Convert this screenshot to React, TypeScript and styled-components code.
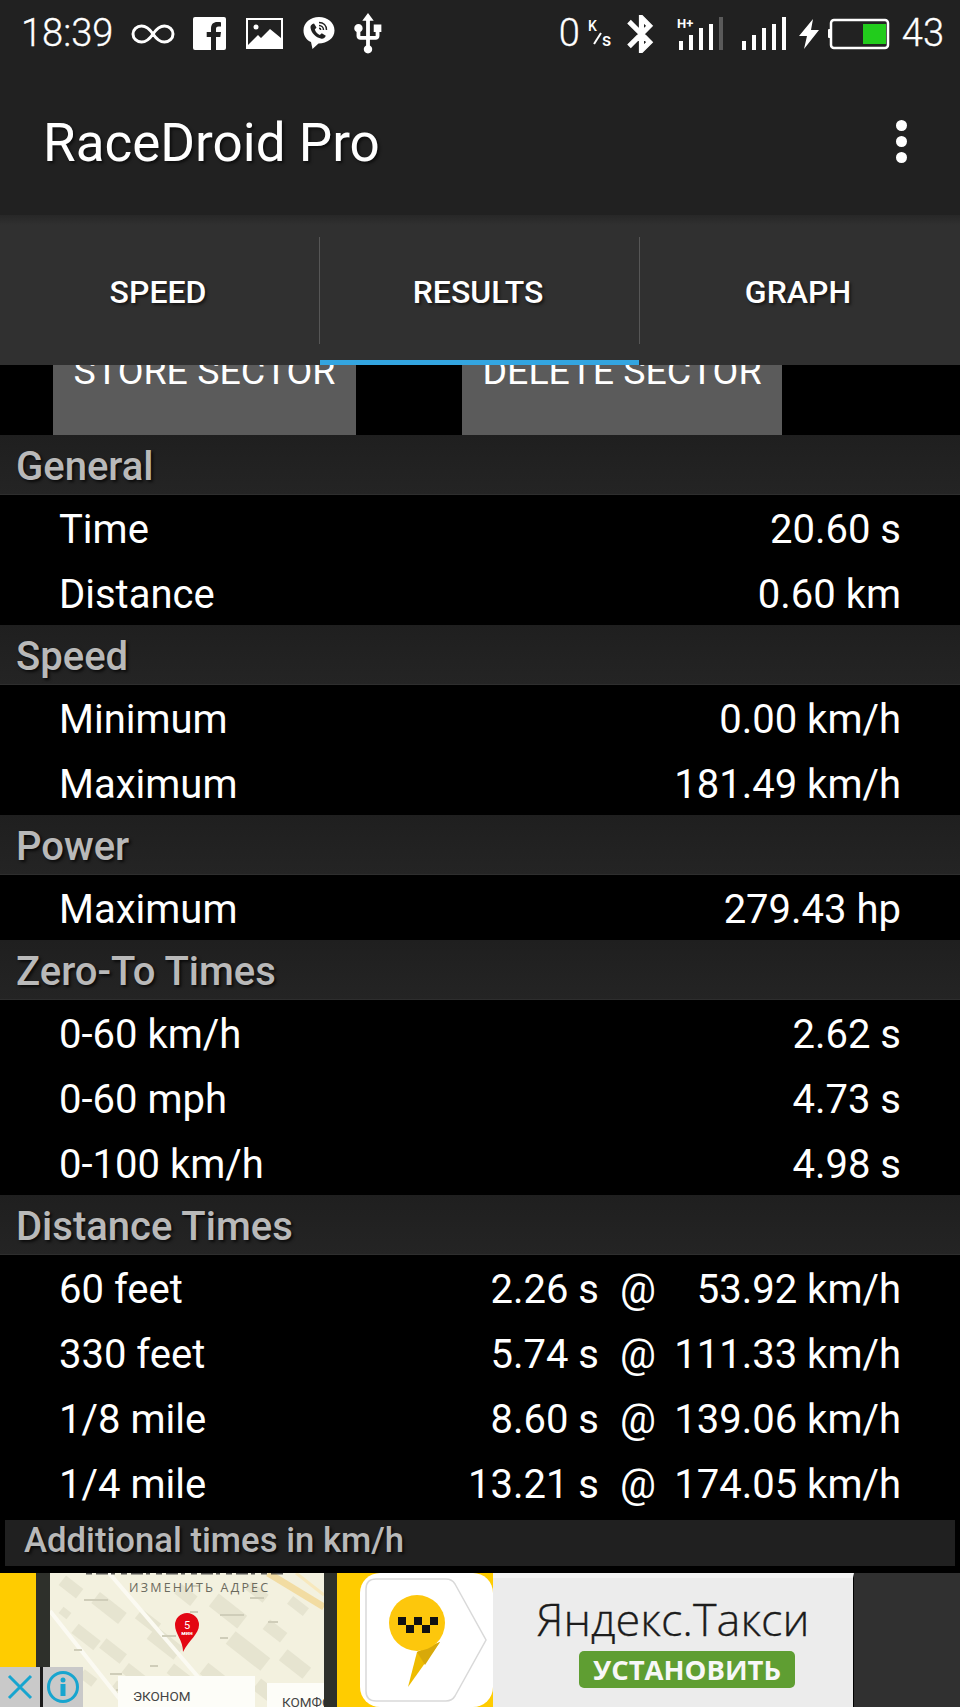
import React from 'react';
import styled, { createGlobalStyle } from 'styled-components';

const GlobalStyle = createGlobalStyle`
  html, body {
    margin: 0;
    padding: 0;
    background: #000;
  }
  * {
    box-sizing: border-box;
  }
`;

const Screen = styled.div`
  width: 960px;
  height: 1707px;
  display: flex;
  flex-direction: column;
  overflow: hidden;
  background: #000;
  color: #fff;
  font-family: Roboto, "Liberation Sans", sans-serif;
`;

/* Status bar */

const StatusBar = styled.div`
  height: 67px;
  flex: none;
  display: flex;
  align-items: center;
  justify-content: space-between;
  padding: 0 16px 0 21px;
  background: #212121;
`;

const StatusGroup = styled.div`
  display: flex;
  align-items: center;
`;

const StatusText = styled.span<{ $left?: number }>`
  font-size: 38px;
  font-weight: 300;
  line-height: 67px;
  margin-left: ${(p) => p.$left ?? 0}px;
  -webkit-text-stroke: 0.3px #fff;
`;

const StatusIcon = styled.svg<{ $left: number }>`
  display: block;
  flex: none;
  margin-left: ${(p) => p.$left}px;
`;

const Signal = ({ left, bars, dim, hplus }: { left: number; bars: number[]; dim?: boolean; hplus?: boolean }) => (
  <StatusIcon $left={left} width="46" height="36" viewBox="0 0 46 36">
    {hplus && (
      <text x="0" y="12" fontSize="13" fontWeight="700" fill="#fff" fontFamily="Roboto, sans-serif">
        H+
      </text>
    )}
    {bars.map((h, i) => (
      <rect
        key={i}
        x={2 + i * 10}
        y={34 - h}
        width="4"
        height={h}
        fill={dim && i === bars.length - 1 ? '#5a5a5a' : '#fff'}
      />
    ))}
  </StatusIcon>
);

/* Action bar */

const ActionBar = styled.div`
  height: 148px;
  flex: none;
  display: flex;
  align-items: center;
  justify-content: space-between;
  padding: 0 53px 0 43px;
  background: #212121;
`;

const Title = styled.h1`
  margin: 4px 0 0;
  font-size: 53px;
  font-weight: 400;
  color: #fff;
  text-shadow: 2px 2px 3px rgba(0, 0, 0, 0.6);
`;

const OverflowMenu = styled.div`
  display: flex;
  flex-direction: column;
  gap: 5px;
`;

const MenuDot = styled.span`
  width: 11px;
  height: 11px;
  border-radius: 50%;
  background: #fff;
`;

/* Tabs */

const TabBar = styled.div`
  height: 150px;
  flex: none;
  display: flex;
  background: linear-gradient(#272727, #303030 10px, #303030);
`;

const Tab = styled.div<{ $active?: boolean; $divider?: boolean }>`
  position: relative;
  flex: 1;
  display: flex;
  align-items: center;
  justify-content: center;
  padding: 3px 4px 0 0;
  font-size: 32px;
  font-weight: 500;
  text-shadow: 2px 2px 3px rgba(0, 0, 0, 0.55);

  &::after {
    content: '';
    display: ${(p) => (p.$divider ? 'block' : 'none')};
    position: absolute;
    top: 22px;
    right: 0;
    width: 1px;
    height: 107px;
    background: #565656;
  }

  &::before {
    content: '';
    display: ${(p) => (p.$active ? 'block' : 'none')};
    position: absolute;
    left: 0;
    right: 1px;
    bottom: 0;
    height: 5px;
    background: #33a5e0;
  }
`;

/* Results list */

const ScrollArea = styled.div`
  flex: 1;
  min-height: 0;
  overflow: hidden;
  background: #000;
`;

const ButtonRow = styled.div`
  height: 100px;
  margin-top: -30px;
  display: flex;
  padding-left: 53px;
`;

const SectorButton = styled.div<{ $width: number; $left?: number }>`
  width: ${(p) => p.$width}px;
  margin-left: ${(p) => p.$left ?? 0}px;
  padding-top: 15px;
  background: #5b5b5b;
  font-size: 37.5px;
  line-height: 42px;
  text-align: center;
  white-space: nowrap;
`;

const SectionHeader = styled.div`
  height: 60px;
  display: flex;
  align-items: center;
  padding: 3px 0 0 16px;
  background: linear-gradient(#1f1f1f, #242424);
  border-bottom: 1px solid #2e2e2e;
  font-size: 40px;
  font-weight: 500;
  color: #b9b9b9;
  text-shadow: 2px 2px 3px rgba(0, 0, 0, 0.7);
`;

const Row = styled.div`
  height: 65px;
  display: flex;
  align-items: center;
  padding: 4px 59px 0 59px;
  font-size: 40px;
  color: #fff;
`;

const RowLabel = styled.span`
  flex: 1;
`;

const RowTime = styled.span`
  width: 140px;
  text-align: right;
`;

const RowAt = styled.span`
  width: 57px;
  text-align: right;
`;

const RowValue = styled.span<{ $width?: number }>`
  width: ${(p) => (p.$width ? `${p.$width}px` : 'auto')};
  text-align: right;
`;

const FootNote = styled.div`
  height: 46px;
  margin: 5px 5px 0;
  display: flex;
  align-items: center;
  padding: 0 0 6px 19px;
  background: #202020;
  font-size: 34.7px;
  font-weight: 500;
  color: #b9b9b9;
  text-shadow: 2px 2px 3px rgba(0, 0, 0, 0.7);
`;

/* Ad banner */

const AdBanner = styled.div`
  position: relative;
  height: 134px;
  flex: none;
  display: flex;
  overflow: hidden;
  background: #ffcc00;
`;

const AdStrip = styled.div<{ $width: number; $color: string }>`
  width: ${(p) => p.$width}px;
  flex: none;
  background: ${(p) => p.$color};
`;

const PhoneScreen = styled.div`
  position: relative;
  width: 274px;
  flex: none;
  overflow: hidden;
  background: #f3f1df;
`;

const MapDrawing = styled.svg`
  display: block;
  width: 274px;
  height: 134px;
`;

const CarClass = styled.div<{ $left: number; $top: number; $width: number; $padTop: number }>`
  position: absolute;
  left: ${(p) => p.$left}px;
  top: ${(p) => p.$top}px;
  width: ${(p) => p.$width}px;
  height: 60px;
  padding: ${(p) => p.$padTop}px 0 0 15px;
  background: #fdfdf8;
  color: #444;
  font-family: Roboto, sans-serif;
  font-size: 13.5px;
  line-height: 16px;
  white-space: nowrap;
`;

const LogoTile = styled.svg`
  display: block;
  flex: none;
  width: 133px;
  height: 134px;
`;

const AdCopy = styled.div`
  width: 361px;
  flex: none;
  display: flex;
  flex-direction: column;
  align-items: center;
  padding-top: 16px;
  background: #ececec;
  border-top: 5px solid #f4f4f4;
  border-right: 1px solid #000;
`;

const AdTitle = styled.div`
  font-family: "Open Sans", sans-serif;
  font-size: 45px;
  font-weight: 300;
  line-height: 50px;
  color: #1c1c1c;
  -webkit-text-stroke: 0.3px #1c1c1c;
`;

const InstallButton = styled.div`
  width: 216px;
  height: 37px;
  margin: 7px 0 0 28px;
  display: flex;
  align-items: center;
  justify-content: center;
  border-radius: 5px;
  background: #5f9e32;
  color: #f7f7f7;
  font-family: "Open Sans", sans-serif;
  font-size: 27.5px;
  font-weight: 700;
`;

const AdSpacer = styled.div`
  flex: 1;
  background: #303030;
`;

const AdControl = styled.div<{ $left: number }>`
  position: absolute;
  left: ${(p) => p.$left}px;
  bottom: 0;
  width: 40px;
  height: 40px;
  background: #c9c9c9;
  display: flex;
  align-items: center;
  justify-content: center;
`;

const ControlGap = styled.div`
  position: absolute;
  left: 40px;
  bottom: 0;
  width: 3px;
  height: 40px;
  background: #1c1c1c;
`;

const BLOCKS: [number, number, number, number][] = [
  [10, 8, 22, 12], [42, 28, 34, 14], [22, 58, 28, 12], [50, 72, 26, 12], [72, 98, 30, 12],
  [86, 42, 24, 12], [98, 62, 34, 16], [62, 112, 18, 10], [118, 96, 22, 12], [160, 30, 36, 16],
  [176, 70, 44, 16], [196, 14, 22, 10], [150, 100, 38, 14], [214, 52, 22, 12], [230, 84, 30, 14],
  [204, 112, 26, 14], [126, 16, 20, 12], [238, 28, 20, 10], [10, 36, 10, 8], [30, 100, 16, 10],
];

const MAP_LABELS: [number, number, number][] = [
  [34, 26, 24], [112, 62, 14], [170, 41, 24], [200, 24, 14], [60, 100, 12], [24, 76, 8],
  [218, 48, 10], [100, 92, 8], [170, 64, 8], [66, 116, 14], [140, 38, 8], [140, 12, 10],
];

const Times = [
  { label: '60 feet', time: '2.26 s', speed: '53.92 km/h' },
  { label: '330 feet', time: '5.74 s', speed: '111.33 km/h' },
  { label: '1/8 mile', time: '8.60 s', speed: '139.06 km/h' },
  { label: '1/4 mile', time: '13.21 s', speed: '174.05 km/h' },
];

const Section = ({ title, rows }: { title: string; rows: [string, string][] }) => (
  <>
    <SectionHeader>{title}</SectionHeader>
    {rows.map(([label, value]) => (
      <Row key={label}>
        <RowLabel>{label}</RowLabel>
        <RowValue>{value}</RowValue>
      </Row>
    ))}
  </>
);

export default function App() {
  return (
    <>
      <GlobalStyle />
      <Screen>
        <StatusBar>
          <StatusGroup>
            <StatusText>18:39</StatusText>
            <StatusIcon $left={18} width="44" height="20" viewBox="0 0 44 20">
              <path
                d="M22 10C18 4 15 2 10.500 2 5.800 2 2 5.500 2 10s3.800 8 8.500 8C15 18 18 16 22 10c4-6 7-8 11.500-8C38.200 2 42 5.500 42 10s-3.800 8-8.500 8C29 18 26 16 22 10z"
                fill="none"
                stroke="#fff"
                strokeWidth="3"
              />
            </StatusIcon>
            <StatusIcon $left={18} width="34" height="34" viewBox="0 0 34 34">
              <rect width="33" height="33" rx="2" fill="#fff" />
              <path
                d="M23 33V20h4.300l.7-5h-5v-3c0-1.500.5-2.500 2.600-2.500H28V5.200C27.500 5.100 26 5 24.200 5 20.500 5 18 7.200 18 11.400V15h-4.300v5H18v13z"
                fill="#212121"
              />
            </StatusIcon>
            <StatusIcon $left={19} width="37" height="31" viewBox="0 0 37 31">
              <rect x="1" y="1" width="35" height="29" fill="#212121" stroke="#fff" strokeWidth="2" />
              <circle cx="10" cy="9" r="2.500" fill="#fff" />
              <path d="M2 27l10-10 3 3 9-9 11 9v10H2z" fill="#fff" />
              <path d="M3 23l8-7" stroke="#212121" strokeWidth="1.500" />
            </StatusIcon>
            <StatusIcon $left={20} width="32" height="36" viewBox="0 0 32 36">
              <path
                d="M16 1C7.500 1 .5 6.500.5 14.500c0 5.500 3 9.500 7.500 11.500l1.500 7 6-5.500C24.500 27.500 31.500 22 31.500 14.500 31.500 6.500 24.500 1 16 1z"
                fill="#fff"
              />
              <path
                d="M11 7.500l2.500 4-1.700 2c.8 2.500 2.500 4.300 5 5.500l2-1.800 4 2.600c-.8 2-2.500 3.200-4.300 2.900C12.500 21.500 8 16.500 7.500 11.500c-.2-2 1.300-3.600 3.500-4z"
                fill="#212121"
              />
              <path
                d="M16 6.500c4.500 0 7.500 3 7.500 7.500M16 9.500c2.500 0 4.500 2 4.500 4.500M16 12.300c.9 0 1.700.8 1.700 1.700"
                fill="none"
                stroke="#212121"
                strokeWidth="1.500"
              />
            </StatusIcon>
            <StatusIcon $left={13} width="40" height="42" viewBox="3 1 18 22">
              <path
                fill="#fff"
                d="M15 7v4h1v2h-3V5h2l-3-4-3 4h2v8H8v-2.070c.7-.37 1.200-1.080 1.200-1.930 0-1.210-.99-2.200-2.200-2.200-1.210 0-2.200.99-2.200 2.200 0 .85.500 1.560 1.200 1.930V13c0 1.110.89 2 2 2h3v3.050c-.71.37-1.200 1.100-1.200 1.950 0 1.220.99 2.200 2.200 2.200 1.210 0 2.200-.98 2.200-2.200 0-.85-.49-1.580-1.200-1.950V15h3c1.110 0 2-.89 2-2v-2h1V7h-4z"
              />
            </StatusIcon>
          </StatusGroup>
          <StatusGroup>
            <StatusText>0</StatusText>
            <StatusIcon $left={8} width="28" height="30" viewBox="0 0 28 30">
              <text x="0" y="12" fontSize="14" fontWeight="500" fill="#fff" fontFamily="Roboto, sans-serif">K</text>
              <path d="M6 25l7-11" stroke="#fff" strokeWidth="2" />
              <text x="14" y="27" fontSize="18" fontWeight="500" fill="#fff" fontFamily="Roboto, sans-serif">s</text>
            </StatusIcon>
            <StatusIcon $left={11} width="27" height="38" viewBox="5 2 13 20">
              <path
                fill="#fff"
                stroke="#fff"
                strokeWidth="0.7"
                d="M17.710 7.710L12 2h-1v7.590L6.410 5 5 6.410 10.590 12 5 17.590 6.410 19 11 14.410V22h1l5.710-5.710-4.300-4.290 4.300-4.290zM13 5.830l1.880 1.880L13 9.590V5.830zm1.880 10.460L13 18.170v-3.760l1.880 1.880z"
              />
            </StatusIcon>
            <Signal left={23} bars={[9, 15, 22, 26, 33]} dim hplus />
            <Signal left={17} bars={[9, 15, 22, 26, 33]} />
            <StatusIcon $left={13} width="20" height="30" viewBox="0 0 20 30">
              <path d="M14 0L0 17h8L5 30l15-19h-8z" fill="#fff" />
            </StatusIcon>
            <StatusIcon $left={9} width="62" height="32" viewBox="0 0 62 32">
              <rect x="0" y="11" width="3" height="9" rx="1" fill="#fff" />
              <rect x="3" y="2" width="57" height="28" rx="3" fill="#222" stroke="#fff" strokeWidth="2.500" />
              <rect x="35" y="6" width="23" height="20" fill="#22cc1c" />
            </StatusIcon>
            <StatusText $left={12}>43</StatusText>
          </StatusGroup>
        </StatusBar>

        <ActionBar>
          <Title>RaceDroid Pro</Title>
          <OverflowMenu>
            <MenuDot />
            <MenuDot />
            <MenuDot />
          </OverflowMenu>
        </ActionBar>

        <TabBar>
          <Tab $divider>SPEED</Tab>
          <Tab $divider $active>RESULTS</Tab>
          <Tab>GRAPH</Tab>
        </TabBar>

        <ScrollArea>
          <ButtonRow>
            <SectorButton $width={303}>STORE SECTOR</SectorButton>
            <SectorButton $width={320} $left={106}>DELETE SECTOR</SectorButton>
          </ButtonRow>

          <Section
            title="General"
            rows={[
              ['Time', '20.60 s'],
              ['Distance', '0.60 km'],
            ]}
          />
          <Section
            title="Speed"
            rows={[
              ['Minimum', '0.00 km/h'],
              ['Maximum', '181.49 km/h'],
            ]}
          />
          <Section title="Power" rows={[['Maximum', '279.43 hp']]} />
          <Section
            title="Zero-To Times"
            rows={[
              ['0-60 km/h', '2.62 s'],
              ['0-60 mph', '4.73 s'],
              ['0-100 km/h', '4.98 s'],
            ]}
          />

          <SectionHeader>Distance Times</SectionHeader>
          {Times.map((t) => (
            <Row key={t.label}>
              <RowLabel>{t.label}</RowLabel>
              <RowTime>{t.time}</RowTime>
              <RowAt>@</RowAt>
              <RowValue $width={245}>{t.speed}</RowValue>
            </Row>
          ))}

          <FootNote>Additional times in km/h</FootNote>
        </ScrollArea>

        <AdBanner>
          <AdStrip $width={36} $color="#ffcc00" />
          <AdStrip $width={14} $color="#2e302b" />
          <PhoneScreen>
            <MapDrawing viewBox="0 0 274 134">
              <rect width="274" height="134" fill="#f3f1df" />
              {BLOCKS.map(([x, y, w, h], i) => (
                <rect
                  key={i}
                  x={x}
                  y={y}
                  width={w}
                  height={h}
                  fill="#e6e4d0"
                  transform={`rotate(38 ${x + w / 2} ${y + h / 2})`}
                />
              ))}
              <path d="M59 0l90 105 22 29M0 38l76 96" fill="none" stroke="#fbfaf2" strokeWidth="4" />
              <path d="M218 0l56 34" fill="none" stroke="#f2dca2" strokeWidth="7" />
              <path d="M246 0l28 22" fill="none" stroke="#f7e8bd" strokeWidth="3" />
              {MAP_LABELS.map(([x, y, w], i) => (
                <rect key={i} x={x} y={y} width={w} height="2" fill="#cfcdb9" />
              ))}
              <path
                d="M36 0h200"
                stroke="#333"
                strokeWidth="3"
                strokeDasharray="6 4 12 3 4 6"
                opacity="0.8"
              />
              <text
                x="79"
                y="19"
                fontSize="12.500"
                letterSpacing="2.200"
                fill="#6b6a5e"
                fontFamily="'Open Sans', sans-serif"
              >
                ИЗМЕНИТЬ АДРЕС
              </text>
              <path d="M125 52a12 12 0 0 1 24 0c0 9-10 15-16 27 0-12-8-18-8-27z" fill="#e30613" />
              <text x="137" y="56" fontSize="11" fill="#fff" textAnchor="middle" fontFamily="Roboto, sans-serif">5</text>
              <text x="137" y="62" fontSize="6" fontWeight="700" fill="#fff" textAnchor="middle" fontFamily="Roboto, sans-serif">мин</text>
            </MapDrawing>
            <CarClass $left={68} $top={103} $width={137} $padTop={12}>ЭКОНОМ</CarClass>
            <CarClass $left={217} $top={110} $width={60} $padTop={11}>КОМФО</CarClass>
          </PhoneScreen>
          <AdStrip $width={13} $color="#2e302b" />
          <AdStrip $width={23} $color="#ffcc00" />
          <LogoTile viewBox="0 0 133 134">
            <path d="M20 0h93a20 20 0 0 1 20 20v94a20 20 0 0 1-20 20H20a20 20 0 0 1-20-20V20A20 20 0 0 1 20 0z" fill="#fff" />
            <path
              d="M16 6h70q6 0 9 5l31 56-31 56q-3 5-9 5H16q-10 0-10-10V16Q6 6 16 6z"
              fill="none"
              stroke="#d9d9d9"
              strokeWidth="1.500"
            />
            <path d="M48 114l9-35 23-10z" fill="#eebc00" />
            <path d="M57 79l23-10-15 23z" fill="#d8a90a" />
            <circle cx="57" cy="50" r="28" fill="#fdc70c" />
            <rect x="38" y="44" width="8" height="8" fill="#111" />
            <rect x="46" y="52" width="8" height="8" fill="#111" />
            <rect x="54" y="44" width="8" height="8" fill="#111" />
            <rect x="62" y="52" width="8" height="8" fill="#111" />
            <rect x="70" y="44" width="8" height="8" fill="#111" />
          </LogoTile>
          <AdCopy>
            <AdTitle>Яндекс.Такси</AdTitle>
            <InstallButton>УСТАНОВИТЬ</InstallButton>
          </AdCopy>
          <AdSpacer />
          <AdControl $left={0}>
            <svg width="28" height="28" viewBox="0 0 28 28">
              <path d="M3 3l22 22M25 3L3 25" stroke="#17a5cf" strokeWidth="3" fill="none" />
            </svg>
          </AdControl>
          <ControlGap />
          <AdControl $left={43}>
            <svg width="34" height="34" viewBox="0 0 34 34">
              <circle cx="17" cy="17" r="14.500" fill="none" stroke="#17a5cf" strokeWidth="3" />
              <circle cx="17" cy="10" r="2.500" fill="#17a5cf" />
              <rect x="14.500" y="14" width="5" height="12" fill="#17a5cf" />
            </svg>
          </AdControl>
        </AdBanner>
      </Screen>
    </>
  );
}
